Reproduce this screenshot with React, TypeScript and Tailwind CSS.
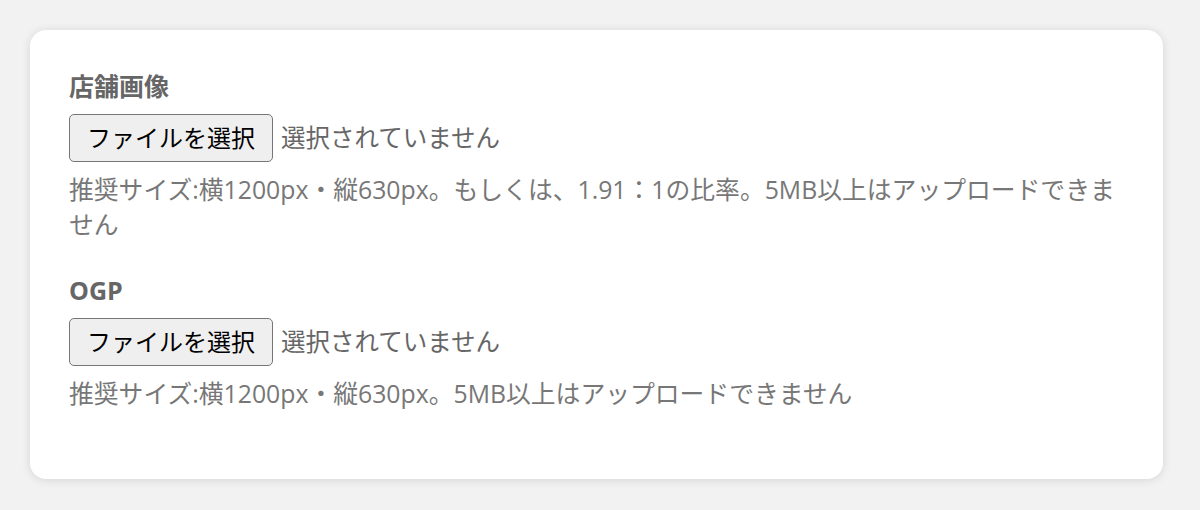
import React from 'react';

const font = { fontFamily: '"Open Sans", "Noto Sans CJK JP", sans-serif' };

function FileField({ label, hint }: { label: string; hint: string }) {
  return (
    <div className="mb-[30px]">
      <p className="text-[25px] font-bold leading-[36px] text-[#666]">{label}</p>
      <div className="mt-[10px] flex items-center gap-[8px]">
        <button
          type="button"
          className="h-[48px] w-[204px] rounded-[5px] border border-[#767676] bg-[#efefef] text-[24px] leading-none text-black"
        >
          ファイルを選択
        </button>
        <span className="text-[24.5px] text-[#666]">選択されていません</span>
      </div>
      <p className="mt-[10px] text-[24.8px] leading-[35px] text-[#777]">{hint}</p>
    </div>
  );
}

export default function App() {
  return (
    <div className="h-[510px] w-[1200px] bg-[#f2f2f2] p-[30px]" style={font}>
      <div className="w-[1133px] rounded-[16px] bg-white px-[39px] pb-[38px] pt-[38px] shadow-[0_1px_10px_rgba(0,0,0,0.12)]">
        <FileField
          label="店舗画像"
          hint="推奨サイズ:横1200px・縦630px。もしくは、1.91：1の比率。5MB以上はアップロードできません"
        />
        <FileField label="OGP" hint="推奨サイズ:横1200px・縦630px。5MB以上はアップロードできません" />
      </div>
    </div>
  );
}
